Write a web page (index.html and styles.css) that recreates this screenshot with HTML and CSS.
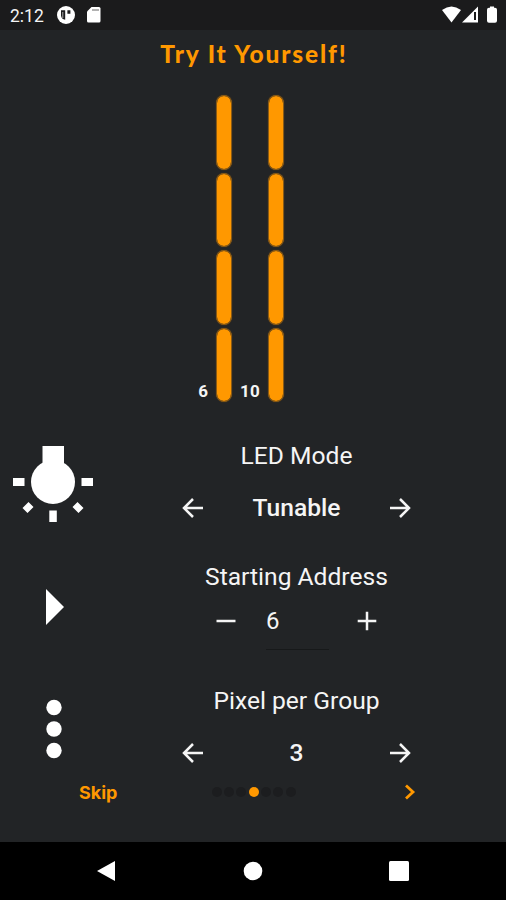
FILE: index.html
```html
<!DOCTYPE html>
<html lang="en">
<head>
<meta charset="utf-8">
<title>Try It Yourself!</title>
<link rel="stylesheet" href="styles.css">
</head>
<body>
<header class="status">
  <span class="clock">2:12</span>
  <svg class="app" width="20" height="20" viewBox="0 0 20 20"><circle cx="10" cy="10" r="9" fill="#fff"/><path d="M5 5.300h4.200v9.500A5 5 0 0 1 5 10.500zM11.400 5.300h3v3.400h-3z" fill="#1b1b1c"/><path d="M6.800 7v6" stroke="#aaa"/></svg>
  <svg class="card" width="16" height="18" viewBox="0 0 16 18"><path d="M5.500 1H13q1.500 0 1.500 1.500V15q0 1.500-1.500 1.500H2.500Q1 16.500 1 15V5.500z" fill="#fff"/><path d="M6 4h7" stroke="#999" stroke-width="1.500"/></svg>
  <svg class="signals" width="60" height="20" viewBox="0 0 60 20"><path d="M3 5Q12.500-2 22 5L12.500 17.500z" fill="#fff"/><path d="M23 17.500L39 1.500v16z" fill="#fff"/><path d="M36 7v8" stroke="#1b1b1c" stroke-width="2"/><path d="M51 1.500h4v1.300h1q2 0 2 2v11q0 2-2 2h-6q-2 0-2-2v-11q0-2 2-2h1z" fill="#fff"/></svg>
</header>
<main>
  <h1>Try It Yourself!</h1>
  <section class="strips">
    <span class="address">6</span>
    <div class="strip"><i></i><i></i><i></i><i></i></div>
    <span class="address second">10</span>
    <div class="strip"><i></i><i></i><i></i><i></i></div>
  </section>
  <section class="setting mode">
    <svg class="icon" width="84" height="80" viewBox="0 0 84 80" fill="#fff"><path d="M31.500 2h21.500v22h-21.500z"/><circle cx="42" cy="38" r="22"/><path d="M2 34h11.500v8H2zM70.500 34H82v8H70.500zM38.300 66.500h7.500V78h-7.500z"/><path d="M11.500 64l6-6 5 5-6 6zM61.500 63l5-5 6 6-5 5z"/></svg>
    <div class="fields">
      <h2 class="led">LED Mode</h2>
      <div class="chooser"><svg width="24" height="24" viewBox="0 0 24 24"><path d="M22 12H3M12 3l-9 9 9 9"/></svg><strong>Tunable</strong><svg width="24" height="24" viewBox="0 0 24 24"><path d="M2 12h19M12 3l9 9-9 9"/></svg></div>
    </div>
  </section>
  <section class="setting start">
    <svg class="icon" width="20" height="38" viewBox="0 0 20 38"><path d="M1 1l18 18L1 37z" fill="#fff"/></svg>
    <div class="fields">
      <h2 class="starting">Starting Address</h2>
      <div class="stepper"><svg width="20" height="20" viewBox="0 0 20 20"><path d="M.5 10h19"/></svg><span class="value">6</span><svg width="20" height="20" viewBox="0 0 20 20"><path d="M.7 10h18.600M10 .7v18.600"/></svg></div>
    </div>
  </section>
  <section class="setting group">
    <svg class="icon" width="18" height="60" viewBox="0 0 18 60" fill="#fff"><circle cx="9" cy="8.500" r="7.700"/><circle cx="9" cy="30" r="7.700"/><circle cx="9" cy="51.500" r="7.700"/></svg>
    <div class="fields">
      <h2 class="pixel">Pixel per Group</h2>
      <div class="chooser"><svg width="24" height="24" viewBox="0 0 24 24"><path d="M22 12H3M12 3l-9 9 9 9"/></svg><strong>3</strong><svg width="24" height="24" viewBox="0 0 24 24"><path d="M2 12h19M12 3l9 9-9 9"/></svg></div>
    </div>
  </section>
  <footer>
    <span class="skip">Skip</span>
    <div class="dots"><i></i><i></i><i></i><i class="on"></i><i></i><i></i><i></i></div>
    <svg class="next" width="12" height="18" viewBox="0 0 12 18"><path d="M2 2.500L9 9l-7 6.500"/></svg>
  </footer>
</main>
<nav>
  <svg width="20" height="22" viewBox="0 0 20 22"><path d="M1 11L19 1v20z"/></svg>
  <svg width="20" height="20" viewBox="0 0 20 20"><circle cx="10" cy="10" r="9.300"/></svg>
  <svg width="20" height="20" viewBox="0 0 20 20"><rect width="20" height="20" rx="1.500"/></svg>
</nav>
</body>
</html>
```
FILE: styles.css
```css
* { box-sizing: border-box; }
body { margin: 0; width: 506px; height: 900px; overflow: hidden; background: #222426; color: #f5f5f5; font-family: Roboto, sans-serif; }
svg { display: block; flex: none; }
h1, h2 { margin: 0; }
.status { height: 30px; display: flex; align-items: center; padding: 0 7px 0 10px; background: #1b1b1c; }
.clock { width: 46px; padding-top: 1px; font-size: 17.500px; font-weight: 400; }
.card { margin-left: 10px; }
.signals { margin-left: auto; }
main { height: 812px; }
h1 { height: 65px; padding-left: 2px; font: 900 24.500px/47px Lato, sans-serif; letter-spacing: 1.850px; text-align: center; color: #ff9800; }
.strips { height: 307px; display: flex; align-items: flex-end; }
.address { width: 216px; padding-right: 8px; text-align: right; font-size: 17px; font-weight: 700; line-height: 22px; }
.second { width: 36px; padding-right: 8px; letter-spacing: .3px; }
.strip { width: 16px; display: flex; flex-direction: column; gap: 3px; }
.strip i { height: 74.500px; border: 1.500px solid #8a5a14; border-radius: 8px; background: #ff9800; background-clip: padding-box; box-shadow: 0 0 1px #8a5a14; }
.setting { display: grid; grid-template-columns: 107px 379px; }
.icon { justify-self: center; }
.mode { height: 159px; padding-top: 37px; }
.mode .icon { margin: 5px 1px 0 0; }
.start { height: 124px; }
.start .icon { margin: 27px 0 0 2px; }
.group { height: 95px; }
.group .icon { margin: 14px 0 0; }
h2 { height: 29px; font-size: 24.600px; font-weight: 400; line-height: 32px; text-align: center; white-space: nowrap; }
.led { padding-top: 1px; }
.chooser { height: 28px; margin-top: 24px; padding: 0 74px; display: grid; grid-template-columns: 24px 1fr 24px; align-items: center; }
.mode .chooser { margin-top: 26px; }
.chooser strong { font-size: 24.600px; font-weight: 500; line-height: 28px; text-align: center; }
.group strong { padding-top: 1px; }
.chooser path, .stepper path { fill: none; stroke: #f5f5f5; stroke-width: 2.500; }
.stepper { height: 43px; margin: 17px 0 0 109px; display: flex; }
.stepper svg { margin-top: 4px; }
.value { width: 63px; height: 43px; margin: 0 28px 0 30px; border-bottom: 1px solid #17191a; font-size: 24px; line-height: 28px; }
footer { display: flex; align-items: center; height: 34px; padding-left: 79px; margin-top: -5px; }
.skip { width: 132.500px; margin-top: 2px; color: #ff9800; font: 700 18px/34px Inter, sans-serif; }
.dots { display: flex; gap: 2.400px; width: 192px; }
.dots i { width: 10px; height: 10px; border-radius: 50%; background: #1c1d1f; }
.dots .on { background: #ff9800; }
.next path { fill: none; stroke: #ff9800; stroke-width: 2.800; }
nav { height: 58px; background: #000; display: flex; align-items: center; justify-content: space-between; padding: 0 97px 0 96px; }
nav svg { fill: #fff; }
```
